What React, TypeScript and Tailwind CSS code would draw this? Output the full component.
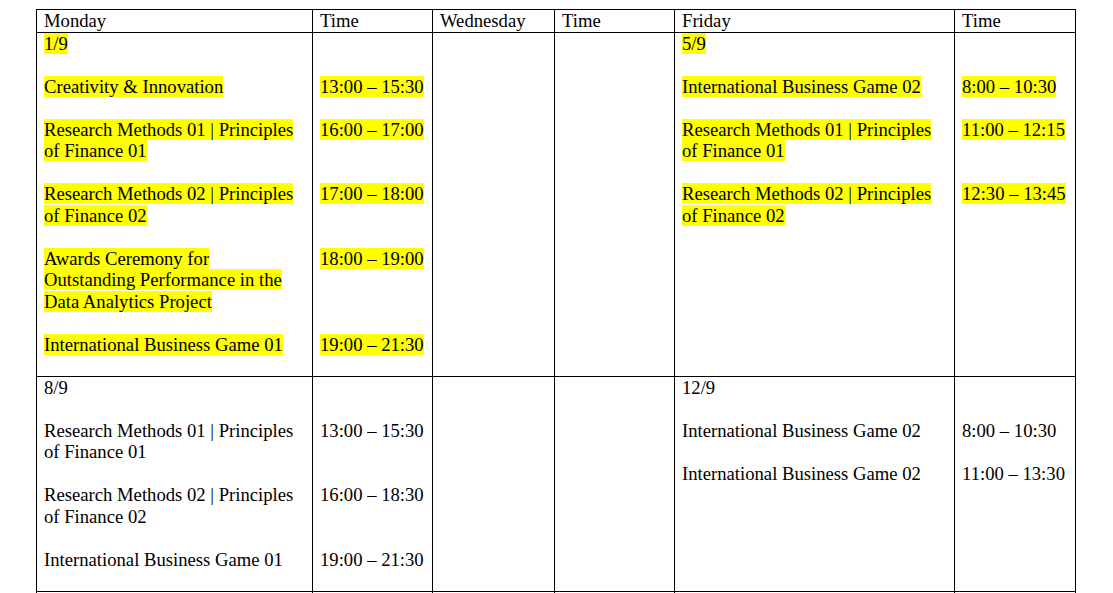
import React from 'react';

interface Slot {
  title: string;
  time: string;
  lines: number;
}

interface DayBlock {
  date: string;
  hl: boolean;
  slots: Slot[];
}

const heights: Record<number, string> = {
  1: 'min-h-[21.5px]',
  2: 'min-h-[43px]',
  3: 'min-h-[64.5px]',
};

const rows: { mon: DayBlock; fri: DayBlock }[] = [
  {
    mon: {
      date: '1/9',
      hl: true,
      slots: [
        { title: 'Creativity & Innovation', time: '13:00 – 15:30', lines: 1 },
        { title: 'Research Methods 01 | Principles of Finance 01', time: '16:00 – 17:00', lines: 2 },
        { title: 'Research Methods 02 | Principles of Finance 02', time: '17:00 – 18:00', lines: 2 },
        { title: 'Awards Ceremony for\nOutstanding Performance in the\nData Analytics Project', time: '18:00 – 19:00', lines: 3 },
        { title: 'International Business Game 01', time: '19:00 – 21:30', lines: 1 },
      ],
    },
    fri: {
      date: '5/9',
      hl: true,
      slots: [
        { title: 'International Business Game 02', time: '8:00 – 10:30', lines: 1 },
        { title: 'Research Methods 01 | Principles of Finance 01', time: '11:00 – 12:15', lines: 2 },
        { title: 'Research Methods 02 | Principles of Finance 02', time: '12:30 – 13:45', lines: 2 },
      ],
    },
  },
  {
    mon: {
      date: '8/9',
      hl: false,
      slots: [
        { title: 'Research Methods 01 | Principles of Finance 01', time: '13:00 – 15:30', lines: 2 },
        { title: 'Research Methods 02 | Principles of Finance 02', time: '16:00 – 18:30', lines: 2 },
        { title: 'International Business Game 01', time: '19:00 – 21:30', lines: 1 },
      ],
    },
    fri: {
      date: '12/9',
      hl: false,
      slots: [
        { title: 'International Business Game 02', time: '8:00 – 10:30', lines: 1 },
        { title: 'International Business Game 02', time: '11:00 – 13:30', lines: 1 },
      ],
    },
  },
];

function Mark({ on, children }: { on: boolean; children: React.ReactNode }) {
  return on ? <span className="bg-[#ffff00]">{children}</span> : <span>{children}</span>;
}

function TitleCell({ day }: { day: DayBlock }) {
  return (
    <td className="border border-black align-top px-[7px] pt-0 pb-[20.5px]">
      <div className="min-h-[21.5px]">
        <Mark on={day.hl}>{day.date}</Mark>
      </div>
      {day.slots.map((s, i) => (
        <div key={i} className={`mt-[21.5px] whitespace-pre-line ${heights[s.lines]}`}>
          <Mark on={day.hl}>{s.title}</Mark>
        </div>
      ))}
    </td>
  );
}

function TimeCell({ day }: { day: DayBlock }) {
  return (
    <td className="border border-black align-top px-[7px] pt-0 pb-[20.5px]">
      <div className="min-h-[21.5px]" />
      {day.slots.map((s, i) => (
        <div key={i} className={`mt-[21.5px] ${heights[s.lines]}`}>
          <Mark on={day.hl}>{s.time}</Mark>
        </div>
      ))}
    </td>
  );
}

export default function App() {
  const heads = ['Monday', 'Time', 'Wednesday', 'Time', 'Friday', 'Time'];
  return (
    <div className="min-h-screen bg-white pt-[9px] pl-[36px] overflow-hidden [font-family:'Liberation_Serif','Times_New_Roman',serif] text-[18.67px] leading-[21.5px] text-black">
      <table className="border-collapse table-fixed w-[1039px]">
        <colgroup>
          <col className="w-[276px]" />
          <col className="w-[120px]" />
          <col className="w-[122px]" />
          <col className="w-[120px]" />
          <col className="w-[280px]" />
          <col className="w-[121px]" />
        </colgroup>
        <thead>
          <tr>
            {heads.map((h, i) => (
              <th key={i} className="border border-black text-left font-normal px-[7px] py-0 align-top h-[21.5px]">
                {h}
              </th>
            ))}
          </tr>
        </thead>
        <tbody>
          {rows.map((r, i) => (
            <tr key={i}>
              <TitleCell day={r.mon} />
              <TimeCell day={r.mon} />
              <td className="border border-black" />
              <td className="border border-black" />
              <TitleCell day={r.fri} />
              <TimeCell day={r.fri} />
            </tr>
          ))}
          <tr>
            {heads.map((_, i) => (
              <td key={i} className="border border-black h-[60px]" />
            ))}
          </tr>
        </tbody>
      </table>
    </div>
  );
}
